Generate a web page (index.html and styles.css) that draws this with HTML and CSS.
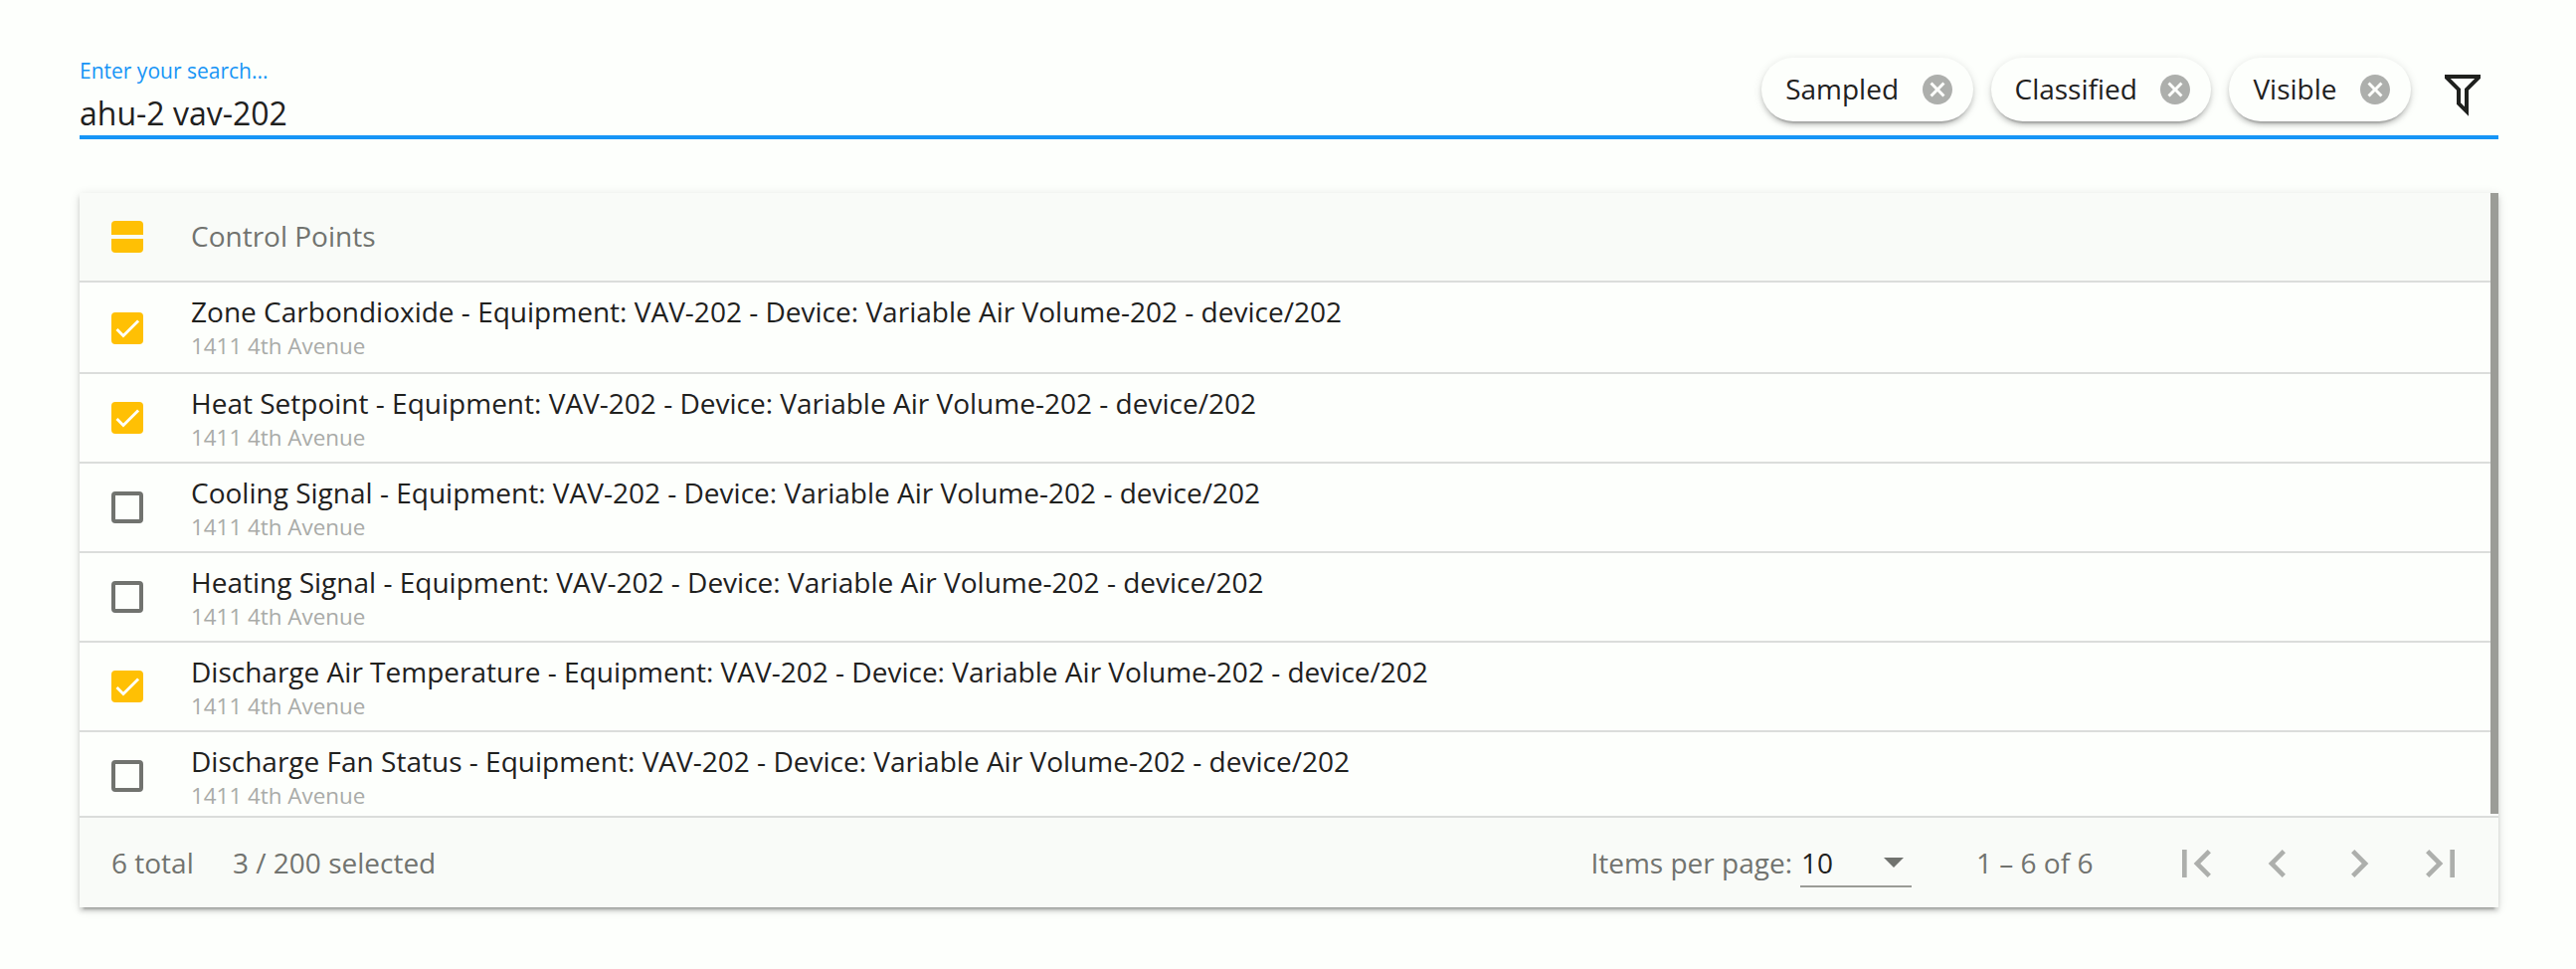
FILE: index.html
```html
<!DOCTYPE html>
<html lang="en">
<head>
<meta charset="utf-8">
<title>Control Points</title>
<link rel="stylesheet" href="styles.css">
</head>
<body>
<svg class="symbols" aria-hidden="true">
  <symbol id="cancel" viewBox="0 0 24 24"><path d="M12 2C6.47 2 2 6.47 2 12s4.47 10 10 10 10-4.47 10-10S17.53 2 12 2zm5 13.59L15.59 17 12 13.41 8.41 17 7 15.59 10.59 12 7 8.41 8.41 7 12 10.59 15.59 7 17 8.41 13.41 12 17 15.59z"/></symbol>
  <symbol id="check" viewBox="0 0 24 24"><path d="M4.1 12.7L9 17.6 20.3 6.3" fill="none" stroke="#fdfffc" stroke-width="2.13"/></symbol>
</svg>
<main class="page">
  <header class="search">
    <div class="field">
      <label class="field-label">Enter your search...</label>
      <div class="field-value">ahu-2 vav-202</div>
    </div>
    <div class="filters">
      <span class="chip">Sampled<svg class="chip-icon"><use href="#cancel"/></svg></span>
      <span class="chip">Classified<svg class="chip-icon"><use href="#cancel"/></svg></span>
      <span class="chip">Visible<svg class="chip-icon"><use href="#cancel"/></svg></span>
      <svg class="filter-icon" viewBox="0 0 24 24"><path d="M3,2H21V4H20.92L15,9.92V22.91L9,16.91V9.91L3.09,4H3V2M11,16.08L13,18.08V9H13.09L18.09,4H5.92L10.92,9H11V16.08Z"/></svg>
    </div>
  </header>
  <section class="card">
    <div class="body">
      <div class="list">
        <div class="row head"><span class="box mixed"></span><span class="heading">Control Points</span></div>
        <div class="row first"><span class="box on"><svg><use href="#check"/></svg></span><div class="item"><div class="name">Zone Carbondioxide - Equipment: VAV-202 - Device: Variable Air Volume-202 - device/202</div><div class="place">1411 4th Avenue</div></div></div>
        <div class="row"><span class="box on"><svg><use href="#check"/></svg></span><div class="item"><div class="name">Heat Setpoint - Equipment: VAV-202 - Device: Variable Air Volume-202 - device/202</div><div class="place">1411 4th Avenue</div></div></div>
        <div class="row"><span class="box"></span><div class="item"><div class="name">Cooling Signal - Equipment: VAV-202 - Device: Variable Air Volume-202 - device/202</div><div class="place">1411 4th Avenue</div></div></div>
        <div class="row"><span class="box"></span><div class="item"><div class="name">Heating Signal - Equipment: VAV-202 - Device: Variable Air Volume-202 - device/202</div><div class="place">1411 4th Avenue</div></div></div>
        <div class="row"><span class="box on"><svg><use href="#check"/></svg></span><div class="item"><div class="name">Discharge Air Temperature - Equipment: VAV-202 - Device: Variable Air Volume-202 - device/202</div><div class="place">1411 4th Avenue</div></div></div>
        <div class="row last"><span class="box"></span><div class="item"><div class="name">Discharge Fan Status - Equipment: VAV-202 - Device: Variable Air Volume-202 - device/202</div><div class="place">1411 4th Avenue</div></div></div>
      </div>
      <div class="scrollbar"></div>
    </div>
    <footer class="footer">
      <span class="total">6 total</span>
      <span class="selected">3 / 200 selected</span>
      <span class="per-page">Items per page:</span>
      <div class="select"><span>10</span><svg class="arrow" viewBox="0 0 20 10"><path d="M0 0h20L10 10z"/></svg></div>
      <span class="range">1 – 6 of 6</span>
      <nav class="pager">
        <svg viewBox="0 0 24 24"><path d="M18.41 16.59L13.82 12l4.59-4.59L17 6l-6 6 6 6zM6 6h2v12H6z"/></svg>
        <svg viewBox="0 0 24 24"><path d="M15.41 7.41L14 6l-6 6 6 6 1.41-1.41L10.83 12z"/></svg>
        <svg viewBox="0 0 24 24"><path d="M10 6L8.59 7.41 13.17 12l-4.58 4.59L10 18l6-6z"/></svg>
        <svg viewBox="0 0 24 24"><path d="M5.59 7.41L10.18 12l-4.59 4.59L7 18l6-6-6-6zM16 6h2v12h-2z"/></svg>
      </nav>
    </footer>
  </section>
</main>
</body>
</html>
```
FILE: styles.css
```css
* { box-sizing: border-box; }
body {
  margin: 0;
  background: #fdfffc;
  color: #1f211e;
  font: 28px/38px "Open Sans", "Noto Sans", sans-serif;
  white-space: nowrap;
}
svg { display: block; flex: none; }
.symbols { position: absolute; width: 0; height: 0; }
.page { min-height: 100vh; padding: 54px 78px 0 80px; }

.search {
  display: flex;
  justify-content: space-between;
  height: 86px;
  border-bottom: 4px solid #1695f6;
}
.field-label { display: block; height: 38px; padding-top: 2px; font-size: 21px; line-height: 30px; color: #1695f6; }
.field-value { font-size: 32px; line-height: 44px; }
.filters { display: flex; padding: 4px 12px 0 0; }
.chip {
  display: flex;
  align-items: center;
  height: 64px;
  margin-right: 18px;
  padding: 0 18px 2px 24px;
  border-radius: 32px;
  background: #fdfffc;
  box-shadow: 0 6px 2px -4px rgba(0,0,0,.2), 0 4px 4px 0 rgba(0,0,0,.14), 0 2px 10px 0 rgba(0,0,0,.12);
}
.chip-icon { width: 36px; height: 36px; margin: 2px 0 0 20.5px; fill: #adafac; }
.filter-icon { width: 48px; height: 48px; margin: 13px 0 0 10px; fill: #1f211e; }

.card {
  margin-top: 54px;
  height: 718px;
  background: #fdfffc;
  box-shadow: 0 6px 2px -4px rgba(0,0,0,.2), 0 4px 4px 0 rgba(0,0,0,.14), 0 2px 10px 0 rgba(0,0,0,.12);
}
.body { display: flex; height: 626px; }
.list { flex: 1; }
.scrollbar { width: 8px; height: 624px; background: #9b9c97; }
.row {
  display: flex;
  height: 90px;
  padding-left: 32px;
  border-bottom: 2px solid #dbdddb;
}
.first { height: 92px; }
.last { height: 84px; border-bottom: 0; }
.head { background: #f9fbf8; color: #71736f; }
.box {
  flex: none;
  width: 32px;
  height: 32px;
  margin: 28px 48px 0 0;
  border: 4px solid #71736f;
  border-radius: 4px;
}
.first .box { margin-top: 30px; }
.on, .mixed { border: 0; background: #ffc004; }
.on svg { width: 32px; height: 32px; }
.mixed { padding-top: 14px; }
.mixed::before { content: ""; display: block; height: 4px; background: #f9fbf8; }
.heading { padding-top: 24px; }
.item { padding-top: 10px; }
.name { height: 39px; font-size: 28.02px; }
.place { font-size: 22.4px; line-height: 30px; color: #a9aba8; }

.footer {
  display: flex;
  height: 92px;
  padding: 26px 30px 0 32px;
  border-top: 2px solid #dbdddb;
  background: #f9fbf8;
  color: #71736f;
}
.total { width: 122px; }
.selected { flex: 1; }
.per-page { margin-right: 8px; }
.select {
  display: flex;
  justify-content: space-between;
  width: 112px;
  height: 44px;
  padding: 0 8px 0 1px;
  border-bottom: 2px solid #9b9c97;
  color: #1f211e;
}
.arrow { width: 20px; height: 10px; margin-top: 14px; fill: #71736f; }
.range { width: 193px; margin-left: 65px; }
.pager { display: flex; gap: 26px; margin-top: -8px; }
.pager svg { width: 56px; height: 56px; fill: #adafac; }
```
